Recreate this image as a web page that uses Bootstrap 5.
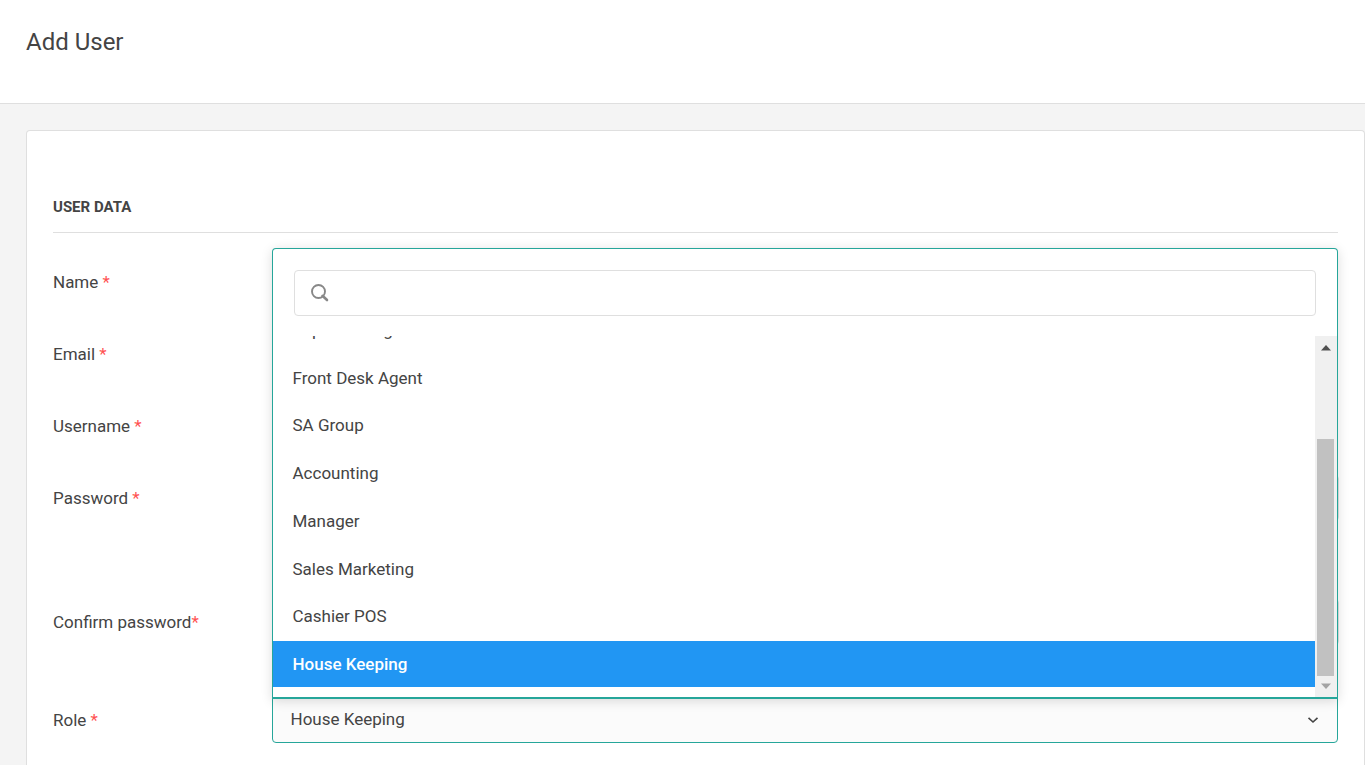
<!DOCTYPE html>
<html lang="en">
<head>
<meta charset="utf-8">
<meta name="viewport" content="width=device-width, initial-scale=1">
<title>Add User</title>
<link href="https://cdn.jsdelivr.net/npm/bootstrap@5.3.0/dist/css/bootstrap.min.css" rel="stylesheet">
<style>
  :root { --teal: #26a69a; --line: #dfdfdf; --gap: 26px; }
  body { background: #f4f4f4; color: #444; font: 400 17px/24px Roboto, "Liberation Sans", sans-serif; }
  .page-head { padding: 26px var(--gap) 45px; border-bottom: 1px solid var(--line); }
  .page-head h1 { font-size: 24px; line-height: 32px; font-weight: 400; }
  .page-body { padding: 26px 0 0 var(--gap); }
  .panel { border: 1px solid var(--line); border-bottom: 0; border-radius: 4px 4px 0 0; padding: 64px 26px 20px; }
  .section-title { font-size: 15px; line-height: 24px; font-weight: 700; padding-bottom: 13px; border-bottom: 1px solid var(--line); margin-bottom: 26px; }
  .field-row { --bs-gutter-x: 26px; margin-bottom: 26px; }
  .field-row.has-hint { margin-bottom: 78px; }
  .field-row.has-note { margin-bottom: 52px; }
  .field-row label { line-height: 46px; }
  .req { color: #ff5252; }
  .form-control, .form-select { height: 46px; border: 1px solid var(--line); border-radius: 4px; color: #444; font-size: 17px; }
  .wide-group { margin-right: -1px; width: auto; }
  .role-select { border-color: var(--teal); border-radius: 0 0 4px 4px; background-color: #fbfbfb; padding: 0 18px;
    background-image: url("data:image/svg+xml,%3Csvg xmlns='http://www.w3.org/2000/svg' viewBox='0 0 12 12'%3E%3Cpath d='M1.5 3.8 6 8l4.500-4.200' fill='none' stroke='%23444' stroke-width='1.600'/%3E%3C/svg%3E");
    background-size: 12px 12px; background-position: right 18px center; }
  .role-menu { bottom: 44px; left: 0; right: 0; z-index: 5; border: 1px solid var(--teal); border-bottom-width: 2px; border-radius: 4px 4px 0 0; box-shadow: 0 2px 12px rgba(0,0,0,.14); }
  .search-wrap { padding: 21px 21px 20px; }
  .search-wrap .form-control { padding-left: 46px; }
  .search-icon { left: 38px; top: 35px; }
  .option-area { height: 361px; }
  .option-view { padding-bottom: 10px; }
  .option-list { height: 380px; flex: none; }
  .option-list button { height: 46px; flex: none; border: 0; background: none; color: inherit; text-align: left; padding: 0 20px; }
  .option-list button.chosen { background: #2196f3; color: #fff; font-weight: 500; }
  .scroll-rail { width: 22px; background: #f0f0f0; padding: 9px 3px 8px 2px; }
  .scroll-thumb { width: 17px; height: 237px; background: #c1c1c1; margin-bottom: 7px; }
</style>
</head>
<body class="d-flex flex-column min-vh-100">
<header class="page-head bg-white"><h1 class="m-0">Add User</h1></header>
<main class="page-body flex-grow-1 d-flex flex-column">
  <form class="panel bg-white flex-grow-1">
    <h2 class="section-title">USER DATA</h2>
    <div class="row field-row">
      <label class="col-2" for="name">Name <span class="req">*</span></label>
      <div class="col-10"><input class="form-control" id="name" type="text"></div>
    </div>
    <div class="row field-row">
      <label class="col-2" for="email">Email <span class="req">*</span></label>
      <div class="col-10"><input class="form-control" id="email" type="email"></div>
    </div>
    <div class="row field-row">
      <label class="col-2" for="username">Username <span class="req">*</span></label>
      <div class="col-10"><input class="form-control" id="username" type="text"></div>
    </div>
    <div class="row field-row has-hint">
      <label class="col-2" for="password">Password <span class="req">*</span></label>
      <div class="col-10"><div class="input-group wide-group"><input class="form-control" id="password" type="password"></div></div>
    </div>
    <div class="row field-row has-note">
      <label class="col-2" for="confirm">Confirm password<span class="req">*</span></label>
      <div class="col-10"><div class="input-group wide-group"><input class="form-control" id="confirm" type="password"></div></div>
    </div>
    <div class="row field-row mb-0">
      <label class="col-2" for="role">Role <span class="req">*</span></label>
      <div class="col-10">
        <div class="position-relative">
          <select class="form-select role-select" id="role"><option>House Keeping</option></select>
          <div class="role-menu position-absolute bg-white">
            <div class="search-wrap">
              <input class="form-control" type="text" aria-label="Search roles">
              <svg class="search-icon position-absolute" width="18" height="18" viewBox="0 0 18 18" fill="none" stroke="#888" aria-hidden="true"><circle cx="7.500" cy="7.500" r="6.500" stroke-width="1.900"/><path d="M11.500 11.800 16 16" stroke-width="2.600" stroke-linecap="round"/></svg>
            </div>
            <div class="option-area d-flex">
              <div class="option-view flex-grow-1 d-flex flex-column justify-content-end overflow-hidden">
                <div class="option-list d-flex flex-column justify-content-between">
                  <button type="button">Super Manager</button>
                  <button type="button">Front Desk Agent</button>
                  <button type="button">SA Group</button>
                  <button type="button">Accounting</button>
                  <button type="button">Manager</button>
                  <button type="button">Sales Marketing</button>
                  <button type="button">Cashier POS</button>
                  <button type="button" class="chosen">House Keeping</button>
                </div>
              </div>
              <div class="scroll-rail d-flex flex-column align-items-center" aria-hidden="true">
                <svg width="10" height="6" viewBox="0 0 10 6"><path d="M0 5.500 5 0l5 5.500z" fill="#505050"/></svg>
                <div class="scroll-thumb mt-auto"></div>
                <svg width="10" height="6" viewBox="0 0 10 6"><path d="M0 .5 5 6l5-5.500z" fill="#a3a3a3"/></svg>
              </div>
            </div>
          </div>
        </div>
      </div>
    </div>
  </form>
</main>
<script src="https://cdn.jsdelivr.net/npm/bootstrap@5.3.0/dist/js/bootstrap.bundle.min.js"></script>
</body>
</html>
